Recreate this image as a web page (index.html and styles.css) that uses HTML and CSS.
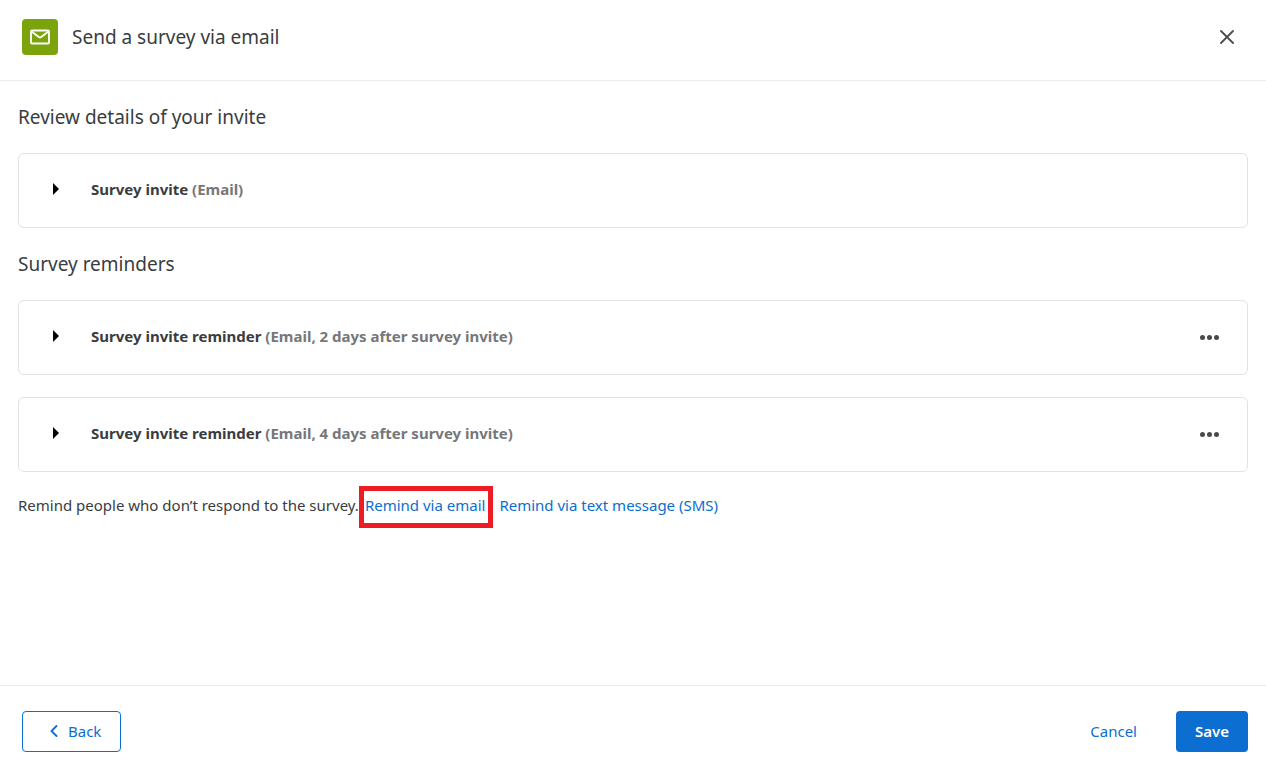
FILE: index.html
```html
<!DOCTYPE html>
<html lang="en">
<head>
  <meta charset="UTF-8">
  <title>Send a survey via email</title>
  <meta name="viewport" content="width=device-width, initial-scale=1">
  <link rel="stylesheet" href="styles.css">
</head>
<body>

<!-- Header -->
<header class="header">
  <span class="header-icon">
    <svg width="20" height="16" viewBox="0 0 20 16" fill="none" stroke="#fff" stroke-width="1.8" stroke-linejoin="round">
      <rect x="1" y="1.5" width="18" height="13" rx="1"/>
      <path d="M1.500 2.500L9.200 8.200Q10 8.700 10.800 8.200L18.500 2.500"/>
    </svg>
  </span>
  <h1>Send a survey via email</h1>
  <button class="icon-btn" type="button" aria-label="Close">
    <svg width="14" height="14" viewBox="0 0 14 14" fill="none" stroke="#4a4c50" stroke-width="1.8" stroke-linecap="round">
      <path d="M1 1l12 12M13 1L1 13"/>
    </svg>
  </button>
</header>

<!-- Invite and reminders -->
<main class="content">
  <h2>Review details of your invite</h2>
  <div class="card">
    <button class="toggle" type="button" aria-expanded="false">
      <span class="arrow"></span>
      <span>Survey invite <span class="muted">(Email)</span></span>
    </button>
  </div>

  <h2>Survey reminders</h2>
  <div class="card">
    <button class="toggle" type="button" aria-expanded="false">
      <span class="arrow"></span>
      <span>Survey invite reminder <span class="muted">(Email, 2 days after survey invite)</span></span>
    </button>
    <button class="more" type="button" aria-label="More options"><i></i><i></i><i></i></button>
  </div>
  <div class="card">
    <button class="toggle" type="button" aria-expanded="false">
      <span class="arrow"></span>
      <span>Survey invite reminder <span class="muted">(Email, 4 days after survey invite)</span></span>
    </button>
    <button class="more" type="button" aria-label="More options"><i></i><i></i><i></i></button>
  </div>

  <div class="remind">
    <span>Remind people who don’t respond to the survey.</span>
    <a class="highlight" href="#">Remind via email</a>
    <a class="sms" href="#">Remind via text message (SMS)</a>
  </div>
</main>

<!-- Footer -->
<footer class="footer">
  <button class="btn btn-outline" type="button">
    <svg width="8" height="12" viewBox="0 0 8 12" fill="none" stroke="currentColor" stroke-width="1.8" stroke-linecap="round" stroke-linejoin="round">
      <path d="M6.500 1L1.500 6l5 5"/>
    </svg>
    Back
  </button>
  <div class="footer-right">
    <button class="btn btn-link" type="button">Cancel</button>
    <button class="btn btn-primary" type="button">Save</button>
  </div>
</footer>

</body>
</html>
```

FILE: styles.css
```css
* { box-sizing: border-box; margin: 0; padding: 0; }

body {
  display: flex;
  flex-direction: column;
  min-height: 100vh;
  font-family: "Noto Sans", sans-serif;
  font-size: 15px;
  line-height: 20px;
  color: #3a3c40;
  background: #fff;
}

button {
  font: inherit;
  color: inherit;
  background: none;
  border: none;
  cursor: pointer;
}

a {
  color: #0b6ed0;
  text-decoration: none;
}

h1, h2 {
  font-size: 19px;
  font-weight: 400;
  line-height: 28px;
}

.header {
  display: flex;
  align-items: center;
  padding: 19px 28px 25px 22px;
  border-bottom: 1px solid #ebebeb;
}

.header-icon {
  display: flex;
  align-items: center;
  justify-content: center;
  width: 36px;
  height: 36px;
  margin-right: 14px;
  background: #7ba30c;
  border-radius: 4px;
}

.header h1 {
  flex: 1;
}

.icon-btn {
  display: flex;
  padding: 4px;
}

.content {
  flex: 1;
  padding: 22px 18px;
}

h2 {
  margin-bottom: 22px;
}

.card {
  display: flex;
  align-items: center;
  min-height: 75px;
  margin-bottom: 22px;
  border: 1px solid #e2e2e2;
  border-radius: 6px;
}

.toggle {
  flex: 1;
  display: flex;
  align-items: center;
  gap: 32px;
  padding: 24px 34px 28px;
  font-weight: 700;
  text-align: left;
}

.arrow {
  border-left: 6px solid #000;
  border-top: 6px solid transparent;
  border-bottom: 6px solid transparent;
}

.muted {
  color: #75777a;
}

.more {
  display: flex;
  gap: 2px;
  padding: 8px 28px;
}

.more i {
  width: 5px;
  height: 5px;
  background: #4a4a4a;
  border-radius: 50%;
}

.remind {
  display: flex;
  align-items: baseline;
  margin-top: -8px;
}

.highlight {
  padding: 4px 3px 8px 1px;
  border: 5px solid #ed1c24;
}

.sms {
  margin-left: 6px;
}

.footer {
  display: flex;
  justify-content: space-between;
  padding: 25px 18px 19px 22px;
  border-top: 1px solid #ebebeb;
}

.footer-right {
  display: flex;
  gap: 20px;
}

.btn {
  display: flex;
  align-items: center;
  gap: 10px;
  height: 41px;
  padding: 0 19px 2px;
  border-radius: 4px;
}

.btn-outline {
  padding-left: 27px;
  color: #0b6ed0;
  border: 1px solid #0b6ed0;
}

.btn-link {
  color: #0b6ed0;
}

.btn-primary {
  font-weight: 600;
  color: #fff;
  background: #0b6ed0;
}
```
